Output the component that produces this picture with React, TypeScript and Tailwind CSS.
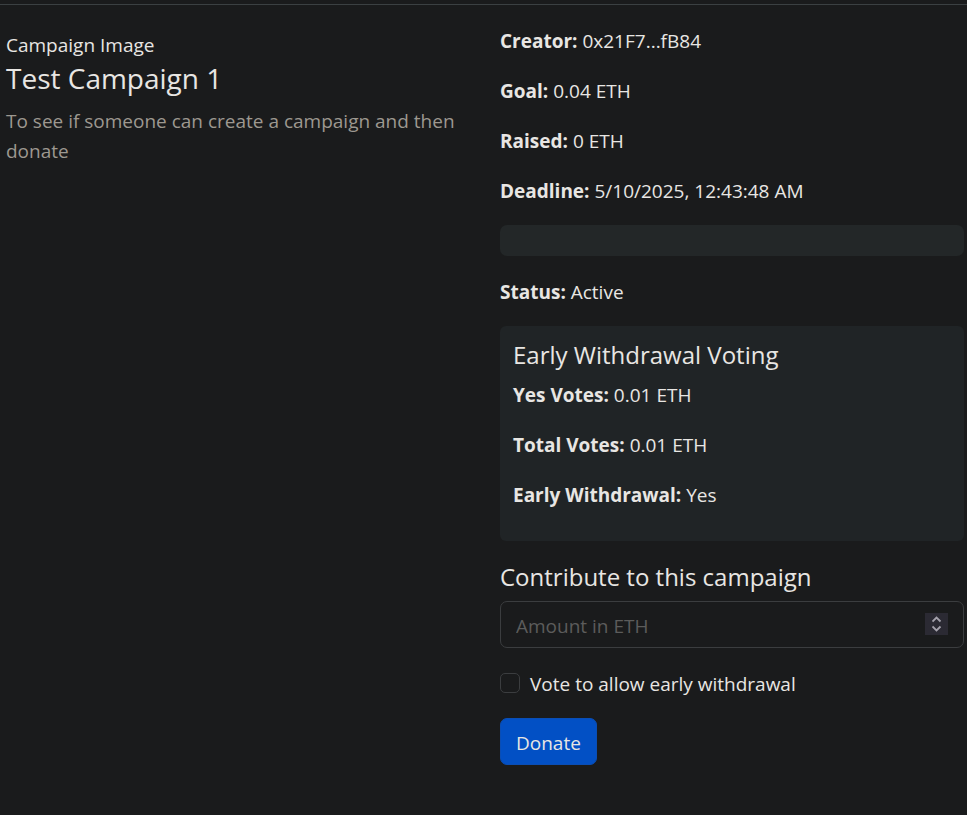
import type { ReactNode } from 'react';

function Field({ label, children }: { label: string; children: ReactNode }) {
  return (
    <p className="mb-5 pt-0.5 leading-7">
      <strong className="font-bold">{label}:</strong> {children}
    </p>
  );
}

export default function App() {
  return (
    <div className="min-h-screen bg-[#1a1b1c] pt-1 font-['Open_Sans','Noto_Sans',sans-serif] text-[19px] leading-[30px] text-[#e8e6e3]">
      <hr className="border-t border-[#3b4042]" />
      <main className="grid grid-cols-2 gap-[30px] pt-5 pr-[3px] pb-5 pl-1.5">
        <section className="pt-[5px]">
          <div role="img" aria-label="Campaign Image">Campaign Image</div>
          <h1 className="mb-2.5 text-[28px] leading-9">Test Campaign 1</h1>
          <p className="text-[#9d9890]">To see if someone can create a campaign and then donate</p>
        </section>

        <section>
          <Field label="Creator">0x21F7...fB84</Field>
          <Field label="Goal">0.04 ETH</Field>
          <Field label="Raised">0 ETH</Field>
          <Field label="Deadline">5/10/2025, 12:43:48 AM</Field>

          <div
            role="progressbar"
            aria-label="Raised"
            aria-valuenow={0}
            aria-valuemin={0}
            aria-valuemax={100}
            className="mb-5 h-[31px] rounded-[7px] bg-[#232728]"
          />

          <Field label="Status">Active</Field>

          <div className="mb-5 rounded-md bg-[#202426] px-[13px] pt-[13px] pb-3">
            <h2 className="mb-2 text-[24px] leading-8">Early Withdrawal Voting</h2>
            <Field label="Yes Votes">0.01 ETH</Field>
            <Field label="Total Votes">0.01 ETH</Field>
            <Field label="Early Withdrawal">Yes</Field>
          </div>

          <form onSubmit={(event) => event.preventDefault()}>
            <h2 className="mb-2 text-[24px] leading-8">Contribute to this campaign</h2>
            <div className="relative mb-5">
              <input
                type="number"
                aria-label="Amount in ETH"
                placeholder="Amount in ETH"
                className="block h-[47px] w-full appearance-none rounded-[7px] border border-[#3b3d3f] bg-transparent pt-0.5 pr-12 pb-0 pl-[15px] outline-none [appearance:textfield] placeholder:text-[#5c5c5b]"
              />
              <span className="pointer-events-none absolute top-3 right-4 flex h-[22px] w-[23px] items-center justify-center bg-[#2b2a33] text-[#a5a2ac]">
                <svg width="10" height="16" viewBox="0 0 10 16" fill="none" stroke="currentColor" strokeWidth="1.8" aria-hidden="true">
                  <path d="M.5 5.5 4.5 1.5l4 4M.5 10.5l4 4 4-4" />
                </svg>
              </span>
            </div>
            <label className="mb-5 flex items-center gap-2.5">
              <input
                type="checkbox"
                className="size-5 appearance-none rounded-[5px] border border-[#3b3d3f] checked:bg-[#0250c5]"
              />
              <span className="pt-0.5 leading-7">Vote to allow early withdrawal</span>
            </label>
            <button type="submit" className="h-[47px] rounded-[7px] border border-[#0a4eb5] bg-[#0250c5] px-[15px] pt-0.5">
              Donate
            </button>
          </form>
        </section>
      </main>
    </div>
  );
}
